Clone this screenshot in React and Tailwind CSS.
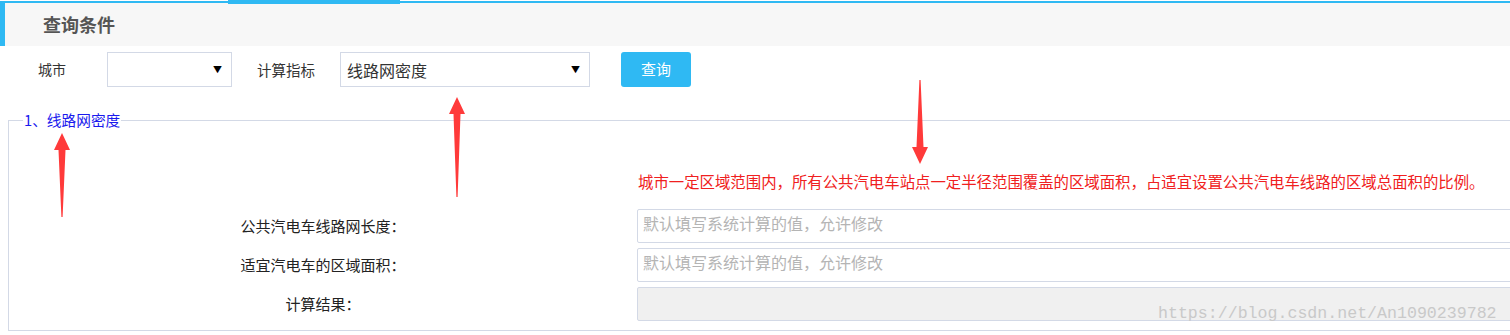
import React from 'react';

const cjk = { fontFamily: '"Noto Sans CJK SC", "Liberation Sans", sans-serif' };

function Arrow({ x, top, bottom, dir }) {
  // red annotation arrow; head is 17px wide, shaft tapers to a point
  const h = bottom - top;
  const path =
    dir === 'up'
      ? `M9 0 L17 17 L12.5 17 L9.6 ${h} L8.4 ${h} L5.5 17 L1 17 Z`
      : `M9 ${h} L17 ${h - 17} L12.5 ${h - 17} L9.6 0 L8.4 0 L5.5 ${h - 17} L1 ${h - 17} Z`;
  return (
    <svg
      className="absolute pointer-events-none"
      style={{ left: x - 9, top }}
      width="18"
      height={h}
      viewBox={`0 0 18 ${h}`}
    >
      <path d={path} fill="#ff3a3a" />
    </svg>
  );
}

function Select({ value, className }) {
  return (
    <div className={`h-[35px] border border-[#d3d9e6] bg-white flex items-center justify-between pl-[6px] pr-[9px] ${className}`}>
      <span className="text-[16px] text-[#333]">{value}</span>
      <span className="text-[9px] text-black">▼</span>
    </div>
  );
}

function Field({ label, placeholder, disabled }) {
  return (
    <div className="flex items-center h-[34px]">
      <div className="w-[628px] text-center text-[15px] text-[#222]">{label}</div>
      <div
        className={`flex-1 h-[34px] border border-[#d3d9e6] rounded-[2px] px-[5px] pt-[1px] text-[16px] text-[#b4b4b4] ${disabled ? 'bg-[#f0f0f0]' : 'bg-white'}`}
      >
        {placeholder}
      </div>
    </div>
  );
}

export default function App() {
  return (
    <div className="relative w-full h-[335px] bg-white overflow-hidden" style={cjk}>
      {/* top tab strip */}
      <div className="flex h-[3px]">
        <div className="w-[228px] border-t border-white bg-[#2fb9f3]"></div>
        <div className="w-[172px] h-[4px] bg-[#2fb9f3]"></div>
        <div className="flex-1 border-t border-white bg-[#2fb9f3]"></div>
      </div>

      {/* header */}
      <div className="h-[43px] bg-[#f7f7f7] border-l-[5px] border-[#2fb9f3] flex items-center pl-[38px]">
        <span className="text-[18px] font-bold text-[#555]">查询条件</span>
      </div>

      {/* query row */}
      <div className="flex items-center mt-[6px] h-[35px]">
        <span className="ml-[38px] w-[69px] text-[14px] text-[#333]">城市</span>
        <Select value="" className="w-[125px]" />
        <span className="ml-[25px] w-[83px] text-[14.5px] text-[#333]">计算指标</span>
        <Select value="线路网密度" className="w-[250px]" />
        <button className="ml-[31px] w-[70px] h-[35px] rounded-[3px] bg-[#2fb9f3] text-white text-[15px]">查询</button>
      </div>

      {/* fieldset */}
      <fieldset className="ml-[8px] mt-[22px] w-[1530px] h-[222px] border border-[#d3d9e6]">
        <legend className="ml-[14px] px-[1px] text-[14.7px] text-[#1a1aee]">1、线路网密度</legend>
        <div className="pl-[629px] mt-[38px] h-[24px] text-[15.4px] text-[#f02020] leading-[24px] whitespace-nowrap">
          城市一定区域范围内，所有公共汽电车站点一定半径范围覆盖的区域面积，占适宜设置公共汽电车线路的区域总面积的比例。
        </div>
        <div className="flex flex-col gap-[5px] mt-[16px]">
          <Field label="公共汽电车线路网长度：" placeholder="默认填写系统计算的值，允许修改" />
          <Field label="适宜汽电车的区域面积：" placeholder="默认填写系统计算的值，允许修改" />
          <Field label="计算结果：" placeholder="" disabled />
        </div>
      </fieldset>

      {/* annotation arrows */}
      <Arrow x={62} top={133} bottom={217} dir="up" />
      <Arrow x={457} top={97} bottom={197} dir="up" />
      <Arrow x={920} top={80} bottom={164} dir="down" />

      {/* watermark */}
      <div
        className="absolute left-[1158px] top-[302px] text-[16.6px] text-[#c9c9c9] pointer-events-none"
        style={{ fontFamily: '"Liberation Mono", monospace' }}
      >
        https://blog.csdn.net/An1090239782
      </div>
    </div>
  );
}
